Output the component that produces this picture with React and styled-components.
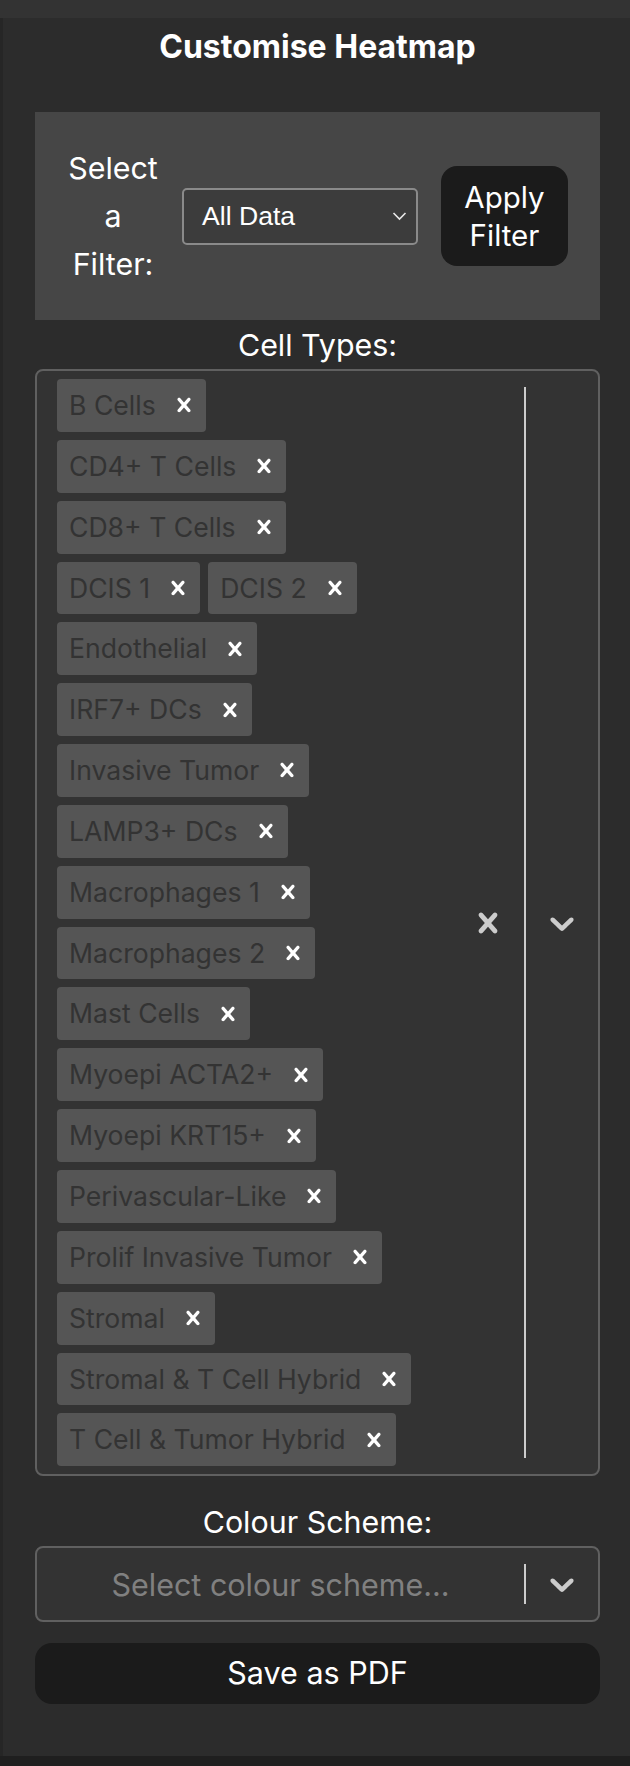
import React from "react";
import styled, { createGlobalStyle } from "styled-components";

const GlobalStyle = createGlobalStyle`
  html, body {
    margin: 0;
    padding: 0;
    background: #1f1f1f;
  }
  body {
    font-family: Inter, "Noto Sans", sans-serif;
    color: #fff;
  }
`;

const CROSS =
  "M14.348 14.849c-0.469 0.469-1.229 0.469-1.697 0l-2.651-3.030-2.651 3.029c-0.469 0.469-1.229 0.469-1.697 0-0.469-0.469-0.469-1.229 0-1.697l2.758-3.15-2.759-3.152c-0.469-0.469-0.469-1.228 0-1.697s1.228-0.469 1.697 0l2.652 3.031 2.651-3.031c0.469-0.469 1.228-0.469 1.697 0s0.469 1.229 0 1.697l-2.758 3.152 2.758 3.15c0.469 0.469 0.469 1.229 0 1.698z";
const CHEVRON =
  "M4.516 7.548c0.436-0.446 1.043-0.481 1.576 0l3.908 3.747 3.908-3.747c0.533-0.481 1.141-0.446 1.574 0 0.436 0.445 0.408 1.197 0 1.615-0.406 0.418-4.695 4.502-4.695 4.502-0.217 0.223-0.502 0.335-0.787 0.335s-0.57-0.112-0.789-0.335c0 0-4.287-4.084-4.695-4.502s-0.436-1.17 0-1.615z";

const Page = styled.div`
  width: 630px;
  height: 1766px;
  background: #1f1f1f;
  display: flex;
  flex-direction: column;
`;

const TopBar = styled.div`
  height: 18px;
  flex-shrink: 0;
  background: #333333;
`;

const Body = styled.div`
  display: flex;
  height: 1738px;
`;

const Gutter = styled.div`
  width: 3px;
  background: #262626;
`;

const Panel = styled.aside`
  flex: 1;
  background: #2c2c2c;
  padding: 9px 30px 0 32px;
  display: flex;
  flex-direction: column;
`;

const Title = styled.h2`
  margin: 0 0 45px;
  font-size: 32px;
  line-height: 40px;
  font-weight: 700;
  text-align: center;
  color: #fff;
`;

const FilterBar = styled.div`
  background: #464646;
  height: 208px;
  box-sizing: border-box;
  padding: 32px;
  display: flex;
  align-items: center;
  justify-content: space-between;
`;

const FilterLabel = styled.div`
  width: 92px;
  font-size: 30.4px;
  line-height: 48px;
  text-align: center;
`;

const NativeSelect = styled.div`
  width: 236px;
  height: 57px;
  box-sizing: border-box;
  border: 2px solid #8a8a8a;
  border-radius: 5px;
  background: #3c3c3c;
  display: flex;
  align-items: center;
  justify-content: space-between;
  padding: 0 9px 0 18px;
  font-family: "Liberation Sans", Arial, sans-serif;
  font-size: 26.6px;
  color: #fff;
`;

const DarkButton = styled.button`
  border: none;
  background: #1b1b1b;
  color: #fff;
  font-family: Inter, "Noto Sans", sans-serif;
  border-radius: ${p => (p.$wide ? "17px" : "16px")};
  width: ${p => (p.$wide ? "100%" : "127px")};
  height: ${p => (p.$wide ? "61px" : "100px")};
  font-size: ${p => (p.$wide ? "30.5px" : "29.5px")};
  line-height: 38.5px;
  padding: 0 18px;
  cursor: pointer;
`;

const FieldLabel = styled.div`
  font-size: 30.4px;
  line-height: 36px;
  text-align: center;
  margin: ${p => p.$top}px 0 6px;
`;

const Control = styled.div`
  display: flex;
  box-sizing: border-box;
  border: 2px solid #606060;
  border-radius: 8px;
  background: #333333;
  min-height: 74px;
`;

const ValueBox = styled.div`
  flex: 1;
  display: flex;
  flex-wrap: wrap;
  align-items: center;
  justify-content: ${p => (p.$center ? "center" : "flex-start")};
  padding: 4px 16px;
  min-width: 0;
`;

const Placeholder = styled.div`
  font-size: 30.5px;
  color: #808080;
  margin: 0 4px;
`;

const Tag = styled.div`
  display: flex;
  margin: 4px;
  background: #555555;
  border-radius: 4px;
`;

const TagLabel = styled.span`
  padding: 6px 6px 6px 12px;
  font-size: 26.6px;
  line-height: 40.85px;
  color: #333333;
  white-space: nowrap;
`;

const TagRemove = styled.span`
  display: flex;
  align-items: center;
  padding: 0 8px;
  svg {
    width: 28px;
    height: 28px;
    fill: #ffffff;
  }
`;

const Indicators = styled.div`
  display: flex;
  align-items: center;
  align-self: stretch;
  flex-shrink: 0;
`;

const Indicator = styled.div`
  padding: 16px;
  display: flex;
  svg {
    width: 40px;
    height: 40px;
    fill: #cccccc;
  }
`;

const Separator = styled.span`
  align-self: stretch;
  width: 2px;
  margin: 16px 0;
  background: #cccccc;
`;

const Footer = styled.div`
  margin-top: 21px;
`;

const cellTypes = [
  "B Cells",
  "CD4+ T Cells",
  "CD8+ T Cells",
  "DCIS 1",
  "DCIS 2",
  "Endothelial",
  "IRF7+ DCs",
  "Invasive Tumor",
  "LAMP3+ DCs",
  "Macrophages 1",
  "Macrophages 2",
  "Mast Cells",
  "Myoepi ACTA2+",
  "Myoepi KRT15+",
  "Perivascular-Like",
  "Prolif Invasive Tumor",
  "Stromal",
  "Stromal & T Cell Hybrid",
  "T Cell & Tumor Hybrid"
];

const Icon = ({ d }) => (
  <svg viewBox="0 0 20 20" aria-hidden="true">
    <path d={d} />
  </svg>
);

export default function App() {
  return (
    <Page>
      <GlobalStyle />
      <TopBar />
      <Body>
        <Gutter />
        <Panel>
          <Title>Customise Heatmap</Title>
          <FilterBar>
            <FilterLabel>Select a Filter:</FilterLabel>
            <NativeSelect>
              <span>All Data</span>
              <svg width="15" height="10" viewBox="0 0 15 10">
                <polyline
                  points="1.5,2 7.5,8 13.5,2"
                  fill="none"
                  stroke="#e8e8e8"
                  strokeWidth="1.6"
                />
              </svg>
            </NativeSelect>
            <DarkButton>Apply Filter</DarkButton>
          </FilterBar>

          <FieldLabel $top={7}>Cell Types:</FieldLabel>
          <Control>
            <ValueBox>
              {cellTypes.map(c => (
                <Tag key={c}>
                  <TagLabel>{c}</TagLabel>
                  <TagRemove>
                    <Icon d={CROSS} />
                  </TagRemove>
                </Tag>
              ))}
            </ValueBox>
            <Indicators>
              <Indicator>
                <Icon d={CROSS} />
              </Indicator>
              <Separator />
              <Indicator>
                <Icon d={CHEVRON} />
              </Indicator>
            </Indicators>
          </Control>

          <FieldLabel $top={28}>Colour Scheme:</FieldLabel>
          <Control>
            <ValueBox $center>
              <Placeholder>Select colour scheme...</Placeholder>
            </ValueBox>
            <Indicators>
              <Separator />
              <Indicator>
                <Icon d={CHEVRON} />
              </Indicator>
            </Indicators>
          </Control>

          <Footer>
            <DarkButton $wide>Save as PDF</DarkButton>
          </Footer>
        </Panel>
      </Body>
    </Page>
  );
}
